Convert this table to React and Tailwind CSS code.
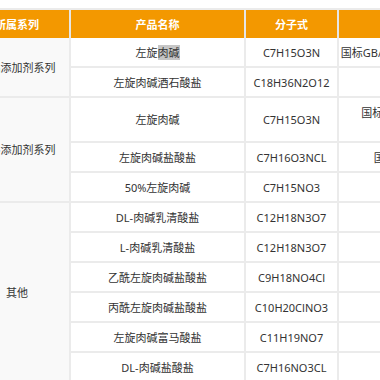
import React from 'react';

const font = { fontFamily: '"Noto Sans", "Noto Sans CJK SC", sans-serif' };

const groups = [
  {
    name: '食品添加剂系列',
    rows: [
      { product: '左旋肉碱', formula: 'C7H15O3N', std: '国标GB/T 17787-1999（左旋肉碱）', mark: true },
      { product: '左旋肉碱酒石酸盐', formula: 'C18H36N2O12', std: '' },
    ],
  },
  {
    name: '饲料添加剂系列',
    rows: [
      { product: '左旋肉碱', formula: 'C7H15O3N', std: ['国标GB/T 34462-2017 饲料', '添加剂 L-肉碱'], tall: true },
      { product: '左旋肉碱盐酸盐', formula: 'C7H16O3NCL', std: '国标GB/T 34462-2017' },
      { product: '50%左旋肉碱', formula: 'C7H15NO3', std: '' },
    ],
  },
  {
    name: '其他',
    rows: [
      { product: 'DL-肉碱乳清酸盐', formula: 'C12H18N3O7', std: '' },
      { product: 'L-肉碱乳清酸盐', formula: 'C12H18N3O7', std: '' },
      { product: '乙酰左旋肉碱盐酸盐', formula: 'C9H18NO4Cl', std: '' },
      { product: '丙酰左旋肉碱盐酸盐', formula: 'C10H20ClNO3', std: '' },
      { product: '左旋肉碱富马酸盐', formula: 'C11H19NO7', std: '' },
      { product: 'DL-肉碱盐酸盐', formula: 'C7H16NO3CL', std: '' },
    ],
  },
];

function ProductName({ row }) {
  if (!row.mark) return row.product;
  return (
    <>
      左旋<span className="bg-[#c6c6c6]">肉碱</span>
    </>
  );
}

export default function App() {
  const cell = 'whitespace-nowrap border-r-2 border-b-2 border-[#ebebeb] p-0 text-center align-middle';
  const head = 'h-[28px] whitespace-nowrap border-r-2 border-[#e6e6e6] bg-[#f39800] p-0 font-bold text-white';
  return (
    <div className="h-[380px] w-[380px] overflow-hidden bg-white pt-[8px]" style={font}>
      <table className="ml-[-35px] w-[556px] min-w-[556px] table-fixed border-separate border-spacing-0 border-t-2 border-[#ebebeb] text-[11px] leading-[15px] text-[#333]">
        <colgroup>
          <col className="w-[106px]" />
          <col className="w-[175px]" />
          <col className="w-[93px]" />
          <col className="w-[182px]" />
        </colgroup>
        <thead>
          <tr>
            <th className={head}>所属系列</th>
            <th className={head}>产品名称</th>
            <th className={head}>分子式</th>
            <th className={head}>执行标准</th>
          </tr>
        </thead>
        <tbody>
          {groups.map((g) =>
            g.rows.map((row, i) => (
              <tr key={g.name + i}>
                {i === 0 && (
                  <td rowSpan={g.rows.length} className={cell + ' bg-[#f9f9f9]'}>
                    {g.name}
                  </td>
                )}
                <td className={cell + (row.tall ? ' h-[45px]' : ' h-[30px]')}>
                  <ProductName row={row} />
                </td>
                <td className={cell}>{row.formula}</td>
                <td className={cell}>
                  {Array.isArray(row.std) ? (
                    <>
                      {row.std[0]}
                      <br />
                      {row.std[1]}
                    </>
                  ) : (
                    row.std
                  )}
                </td>
              </tr>
            ))
          )}
        </tbody>
      </table>
    </div>
  );
}
